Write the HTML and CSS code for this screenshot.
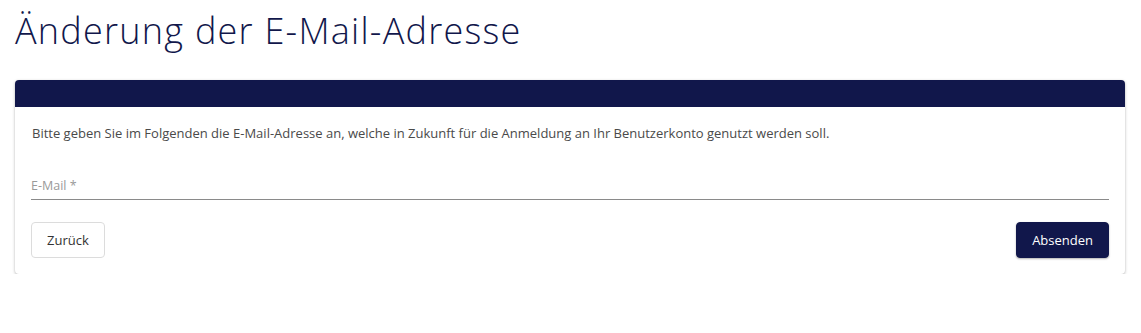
FILE: index.html
```html
<!DOCTYPE html>
<html lang="de">
<head>
<meta charset="utf-8">
<title>Änderung der E-Mail-Adresse</title>
<link rel="stylesheet" href="styles.css">
</head>
<body>
<main class="page">
  <h1 class="title">Änderung der E-Mail-Adresse</h1>
  <section class="card">
    <div class="card-header"></div>
    <div class="card-body">
      <p class="intro">Bitte geben Sie im Folgenden die E-Mail-Adresse an, welche in Zukunft für die Anmeldung an Ihr Benutzerkonto genutzt werden soll.</p>
      <label class="field">
        <span class="field-label">E-Mail *</span>
        <input class="field-input" type="email">
      </label>
      <div class="actions">
        <button class="btn btn-secondary" type="button">Zurück</button>
        <button class="btn btn-primary" type="submit">Absenden</button>
      </div>
    </div>
  </section>
</main>
</body>
</html>
```

FILE: styles.css
```css
html, body {
  margin: 0;
  padding: 0;
  background: #ffffff;
}

body {
  font-family: "Open Sans", "Noto Sans", sans-serif;
  color: #444;
}

.page {
  padding: 0 16px 0 15px;
}

.title {
  margin: 0;
  padding-top: 7px;
  height: 80px;
  box-sizing: border-box;
  font-weight: 300;
  font-size: 36px;
  line-height: 48px;
  color: #11174b;
  letter-spacing: 1.25px;
}

.card {
  border-radius: 4px;
  background: #fff;
  box-shadow: 0 1px 3px rgba(0,0,0,0.3);
  overflow: hidden;
}

.card-header {
  height: 27px;
  background: #11174b;
}

.card-body {
  padding: 17px 16px 16px 16px;
}

.intro {
  margin: 0 0 0 1px;
  font-size: 13px;
  line-height: 18px;
  color: #4a4a4a;
}

.field {
  display: block;
  margin-top: 35px;
  border-bottom: 1px solid #8a8a8a;
  padding-bottom: 4px;
  position: relative;
}

.field-label {
  display: block;
  font-size: 12.5px;
  line-height: 18px;
  color: #9a9a9a;
}

.field-input {
  position: absolute;
  inset: 0;
  opacity: 0;
  border: 0;
}

.actions {
  display: flex;
  justify-content: space-between;
  align-items: center;
  margin-top: 22px;
}

.btn {
  height: 36px;
  border-radius: 4px;
  font-family: inherit;
  font-size: 13px;
  padding: 0 15px;
  cursor: pointer;
}

.btn-secondary {
  background: #fff;
  border: 1px solid #dcdcdc;
  color: #333;
}

.btn-primary {
  background: #11174b;
  border: 1px solid #11174b;
  color: #fff;
  box-shadow: 0 1px 2px rgba(0,0,0,0.3);
}
```
